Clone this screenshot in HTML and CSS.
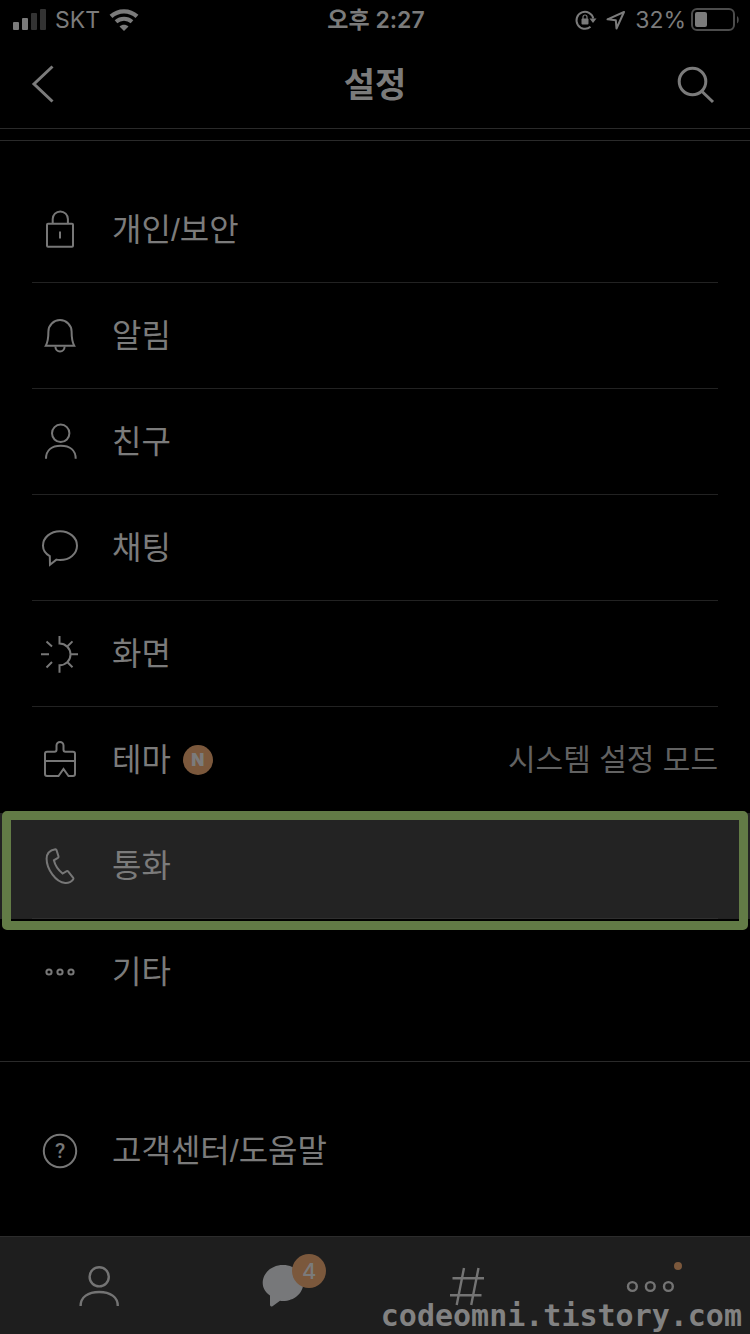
FILE: index.html
```html
<!DOCTYPE html>
<html lang="ko">
<head>
    <meta charset="UTF-8">
    <meta name="viewport" content="width=device-width, initial-scale=1.0">
    <title>설정</title>
    <link rel="stylesheet" href="styles.css">
</head>
<body>
    <div class="status-bar">
        <div class="status-left">
            <svg class="signal" width="33" height="22" viewBox="0 0 33 22">
                <rect x="0" y="13" width="6" height="8" rx="1" />
                <rect x="9" y="9" width="6" height="12" rx="1" />
                <rect class="off" x="18" y="4" width="6" height="17" rx="1" />
                <rect class="off" x="27" y="0" width="6" height="21" rx="1" />
            </svg>
            <span>SKT</span>
            <svg class="wifi" width="30" height="22" viewBox="0 0 30 22">
                <path d="M2 7.400C9.300 .6 20.700 .6 28 7.400" stroke-width="4.200" />
                <path d="M7 12.800c4.600-4 11.400-4 16 0" stroke-width="4" />
                <path class="fill" d="M10.500 17.500c2.600-2.400 6.400-2.400 9 0L15 22z" />
            </svg>
        </div>
        <div class="time">오후 2:27</div>
        <div class="status-right">
            <svg width="22" height="22" viewBox="0 0 22 22">
                <path d="M15.500 17.800A8.500 8.500 0 1 1 18.300 9.500" fill="none" stroke="#7b7b7b" stroke-width="2" />
                <path class="fill" d="M14.500 9.500h7L18 14z" />
                <rect class="fill" x="6.500" y="9.500" width="7" height="6" rx="1" />
                <path d="M8 10V8a2 2 0 0 1 4 0v2" fill="none" stroke="#7b7b7b" stroke-width="1.200" />
            </svg>
            <svg class="arrow" width="20" height="20" viewBox="0 0 20 20">
                <path d="M18 2L1.500 9.300l8.300.9.700 8.300z" fill="none" stroke="#7b7b7b" stroke-width="2" stroke-linejoin="round" />
            </svg>
            <span class="percent">32%</span>
            <svg width="48" height="24" viewBox="0 0 48 24">
                <rect x="1" y="1" width="42" height="21" rx="5" fill="none" stroke="#4c4c4c" stroke-width="2" />
                <rect class="fill" x="4" y="4" width="12" height="15" rx="2" />
                <path d="M46 8c2.300 1.500 2.300 6 0 7.500z" fill="#4c4c4c" />
            </svg>
        </div>
    </div>

    <header class="nav">
        <button type="button" class="nav-btn" aria-label="뒤로">
            <svg width="40" height="44" viewBox="0 0 40 44">
                <path d="M28.500 4.500L10 22l18.500 17.500" />
            </svg>
        </button>
        <h1>설정</h1>
        <button type="button" class="nav-btn" aria-label="검색">
            <svg width="40" height="44" viewBox="0 0 40 44">
                <circle cx="16.500" cy="19.500" r="13.300" />
                <path d="M26 29.500L37 40" />
            </svg>
        </button>
    </header>

    <main>
        <ul class="menu">
            <li>
                <a href="#privacy" class="row">
                    <svg class="icon" viewBox="0 0 40 41">
                        <rect x="7" y="14.700" width="26" height="23" rx="1" />
                        <path d="M12.700 14.700V10a7.600 7.600 0 0 1 15.200 0v4.700M20 22.500v7" />
                    </svg>
                    <span class="label">개인/보안</span>
                </a>
            </li>
            <li>
                <a href="#alerts" class="row">
                    <svg class="icon" viewBox="0 0 40 41">
                        <path d="M5.800 30.700c2.200-4 2.600-7 2.600-14.200a11.600 11.400 0 0 1 23.200 0c0 7.200.4 10.200 2.600 14.200z" />
                        <path d="M15.400 31.500a4.600 5 0 0 0 9.200 0" />
                    </svg>
                    <span class="label">알림</span>
                </a>
            </li>
            <li>
                <a href="#friends" class="row">
                    <svg class="icon" viewBox="0 0 40 41">
                        <circle cx="20.700" cy="12.300" r="8.700" />
                        <path d="M6 37.800C6 29 12 24.700 20.800 24.700S35.700 29 35.700 37.800" />
                    </svg>
                    <span class="label">친구</span>
                </a>
            </li>
            <li>
                <a href="#chats" class="row">
                    <svg class="icon" viewBox="0 0 40 41">
                        <path d="M20 4.200c9.400 0 17 6.300 17 14.500S29.500 33 20 33c-1.300 0-2.400-.1-3.600-.4L10 37.700l-.2-8.500C5.600 26.700 3 23 3 18.700 3 10.500 10.600 4.200 20 4.200z" />
                    </svg>
                    <span class="label">채팅</span>
                </a>
            </li>
            <li>
                <a href="#display" class="row">
                    <svg class="icon" viewBox="0 0 40 41">
                        <path d="M19.500 3v7.500a11 10.900 0 0 1 0 21.800v7.400" />
                        <path d="M31 21.300h7M1 21.300h8M27.500 13.200l5-4.800M27.500 29.300l5 4.900M6.500 8.500l5.500 5M12 29l-5.500 5.500" />
                    </svg>
                    <span class="label">화면</span>
                </a>
            </li>
            <li>
                <a href="#theme" class="row">
                    <svg class="icon" viewBox="0 0 40 41">
                        <path d="M7 12.700h7.500q2 0 2-2V6.500a3.500 3.500 0 0 1 7 0v4.200q0 2 2 2H33q2 0 2 2V35q0 2-2 2h-4.500l-5-7-5 7H7q-2 0-2-2V14.700q0-2 2-2zM5 22h30" />
                    </svg>
                    <span class="label">테마</span>
                    <span class="new">N</span>
                    <span class="value">시스템 설정 모드</span>
                </a>
            </li>
            <li class="selected">
                <a href="#calls" class="row">
                    <svg class="icon" viewBox="0 0 40 41">
                        <path d="M15.400 4.200C10 5.200 6.600 8.700 6.600 13.700c0 10 9 23.500 18.600 24.200 3.400.2 6.200-1.300 8-3.600q.5-.7 0-1.500L28.300 26.600q-.7-.8-1.600-.4L22.600 28.500C18.500 25.300 15 20 13.900 15.300l4-2.400q.9-.6.600-1.500L16.500 5q-.3-.9-1.100-.8z" />
                    </svg>
                    <span class="label">통화</span>
                </a>
            </li>
            <li>
                <a href="#etc" class="row">
                    <svg class="icon" viewBox="0 0 40 41">
                        <circle cx="9" cy="21" r="2.600" />
                        <circle cx="20" cy="21" r="2.600" />
                        <circle cx="31" cy="21" r="2.600" />
                    </svg>
                    <span class="label">기타</span>
                </a>
            </li>
        </ul>
        <ul class="menu">
            <li>
                <a href="#help" class="row">
                    <svg class="icon" viewBox="0 0 40 41">
                        <circle cx="20" cy="21" r="16.200" />
                        <text x="20" y="28" text-anchor="middle">?</text>
                    </svg>
                    <span class="label">고객센터/도움말</span>
                </a>
            </li>
        </ul>
    </main>

    <nav class="tab-bar">
        <a href="#tab-friends" class="tab" aria-label="친구">
            <svg viewBox="0 0 44 44">
                <circle cx="21.200" cy="12.800" r="9.600" />
                <path d="M2.600 42C2.600 33 10 28 21.200 28S39.800 33 39.800 42" />
            </svg>
        </a>
        <a href="#tab-chats" class="tab" aria-label="채팅">
            <svg viewBox="0 0 44 44">
                <path class="solid" d="M22 1c11.300 0 20.300 7.800 20.300 18S33.300 37 22 37q-1.500 0-3-.2l-7.500 5.500q-2.500 1-2.500-1.500V31.500C4.500 28.500 1.700 24 1.700 19 1.700 8.800 10.700 1 22 1z" />
            </svg>
            <span class="count">4</span>
        </a>
        <a href="#tab-hash" class="tab" aria-label="샵">
            <svg viewBox="0 0 44 44">
                <path d="M19 4l-7.300 37M33.500 4l-7.300 37M7.500 14.300H39M5 31.300h31.500" />
            </svg>
        </a>
        <a href="#tab-more" class="tab" aria-label="더보기">
            <svg viewBox="0 0 44 44">
                <circle cx="4.400" cy="22.500" r="4.400" />
                <circle cx="22.300" cy="22.500" r="4.400" />
                <circle cx="40.400" cy="22.500" r="4.400" />
            </svg>
            <span class="dot"></span>
        </a>
        <div class="watermark">codeomni.tistory.com</div>
    </nav>
</body>
</html>
```

FILE: styles.css
```css
* {
    box-sizing: border-box;
}
body {
    margin: 0;
    min-height: 100vh;
    display: flex;
    flex-direction: column;
    background-color: #000;
    color: #7b7b7b;
    font-family: "Noto Sans CJK KR", sans-serif;
}
a {
    color: inherit;
    text-decoration: none;
}
svg {
    display: block;
    flex-shrink: 0;
    overflow: visible;
}
.fill {
    fill: #7b7b7b;
}

/* status bar */
.status-bar {
    display: grid;
    grid-template-columns: 1fr auto 1fr;
    align-items: center;
    height: 40px;
    padding: 0 11px 0 13px;
    font-family: Inter, "Noto Sans CJK KR", sans-serif;
    font-size: 23px;
    line-height: 40px;
}
.status-left,
.status-right {
    display: flex;
    align-items: center;
    gap: 9px;
}
.status-right {
    justify-content: flex-end;
}
.signal {
    fill: #7b7b7b;
}
.signal .off {
    fill: #333;
}
.wifi path {
    fill: none;
    stroke: #7b7b7b;
}
.wifi .fill {
    fill: #7b7b7b;
    stroke: none;
}
.time {
    font-weight: 600;
}
.percent {
    margin-right: -4px;
}

/* header */
.nav {
    display: grid;
    grid-template-columns: 1fr auto 1fr;
    align-items: center;
    height: 89px;
    padding: 0 34px 0 24px;
    border-bottom: 1px solid #2a2a2a;
}
.nav h1 {
    margin: 0 -5px 0 5px;
    padding-bottom: 2px;
    font-size: 34px;
    font-weight: 700;
    line-height: 48px;
}
.nav-btn {
    padding: 0;
    border: none;
    background: none;
    cursor: pointer;
}
.nav-btn:first-child {
    justify-self: start;
}
.nav-btn:last-child {
    justify-self: end;
}
.nav-btn svg {
    fill: none;
    stroke: #7b7b7b;
    stroke-width: 3;
}

/* menu */
main {
    flex: 1;
    padding-top: 11px;
}
.menu {
    margin: 0;
    padding: 36px 0;
    border-top: 1px solid #2a2a2a;
    list-style: none;
}
.menu:last-child {
    padding-bottom: 0;
}
.menu li {
    position: relative;
    padding: 0 32px;
}
.row {
    display: flex;
    align-items: center;
    height: 106px;
    padding-left: 8px;
    border-bottom: 1px solid #222;
}
.menu li:last-child .row {
    border-bottom-color: transparent;
}
.icon {
    width: 40px;
    height: 41px;
    margin-right: 32px;
    fill: none;
    stroke: #777;
    stroke-width: 2;
}
.icon text {
    fill: #777;
    stroke: none;
    font-family: Roboto, sans-serif;
    font-size: 21px;
    font-weight: 500;
}
.label {
    font-family: "Liberation Sans", "Noto Sans CJK KR", sans-serif;
    font-size: 32px;
    line-height: 48px;
}
.new {
    width: 30px;
    height: 30px;
    margin-left: 12px;
    border-radius: 50%;
    background-color: #7b583c;
    font-family: Inter, sans-serif;
    font-size: 17px;
    font-weight: 900;
    line-height: 31px;
    text-align: center;
}
.value {
    margin-left: auto;
    padding-bottom: 5px;
    color: #626262;
    font-size: 30px;
    line-height: 48px;
}
.selected {
    background-color: #232323;
}
.selected .row {
    border-bottom-color: #303030;
}
.selected::after {
    content: "";
    position: absolute;
    z-index: 1;
    top: -2px;
    right: 2px;
    bottom: -11px;
    left: 2px;
    border: 9px solid #627b46;
    border-radius: 5px;
    pointer-events: none;
}

/* bottom tabs */
.tab-bar {
    position: relative;
    display: flex;
    height: 98px;
    padding: 0 8px;
    border-top: 1px solid #2c2c2c;
    background-color: #1e1e1e;
}
.tab {
    position: relative;
    display: flex;
    flex: 1;
    justify-content: center;
    padding-top: 27px;
}
.tab svg {
    width: 44px;
    height: 44px;
    fill: none;
    stroke: #747474;
    stroke-width: 2.4;
}
.tab .solid {
    fill: #77787a;
    stroke: none;
}
.count {
    position: absolute;
    top: 17px;
    left: 50%;
    width: 34px;
    height: 34px;
    margin-left: 9px;
    border-radius: 50%;
    background-color: #7b583c;
    font-family: Inter, sans-serif;
    font-size: 22px;
    font-weight: 500;
    line-height: 34px;
    text-align: center;
}
.dot {
    position: absolute;
    top: 25px;
    left: 50%;
    width: 8px;
    height: 8px;
    margin-left: 24px;
    border-radius: 50%;
    background-color: #7b583c;
}
.watermark {
    position: absolute;
    right: 8px;
    bottom: 0;
    color: #828282;
    font-family: "DejaVu Sans Mono", monospace;
    font-size: 30px;
    font-weight: 700;
    line-height: 36px;
}
```
